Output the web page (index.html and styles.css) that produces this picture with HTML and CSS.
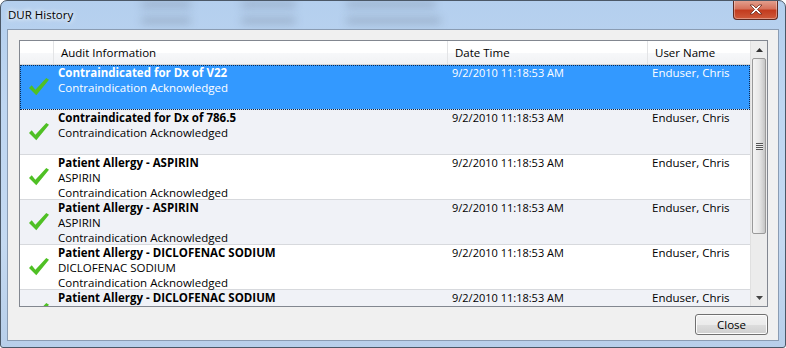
FILE: index.html
```html
<!DOCTYPE html>
<html lang="en">

<head>
    <meta charset="UTF-8">
    <title>DUR History</title>
    <link rel="stylesheet" href="styles.css">
</head>

<body>
    <div class="window">
        <div class="titlebar">
            <div class="glass">
                <span class="blob b1"></span><span class="blob b2"></span><span class="blob b3"></span>
                <span class="blob b4"></span><span class="blob b5"></span><span class="blob b6"></span>
            </div>
            <span class="title">DUR History</span>
            <button class="close-x">
                <svg width="16" height="11" viewBox="0 0 16 11"><path d="M2 1h3l3 3 3-3h3l-4.5 4.5L14 10h-3L8 7l-3 3H2l4.5-4.5z" fill="#fff" stroke="#6b2a1e" stroke-width="0.8"/></svg>
            </button>
        </div>
        <div class="client">
            <div class="list">
                <div class="grid">
                    <div class="header">
                        <div class="col icon"></div>
                        <div class="col audit">Audit Information</div>
                        <div class="col date">Date Time</div>
                        <div class="col user">User Name</div>
                    </div>
                    <div class="rows">
                        <div class="row selected">
                            <div class="col icon"><svg class="check" viewBox="0 0 24 22"><path d="M1 12l3-3 4 5L20 1l3 2-14 17z"/></svg></div>
                            <div class="col audit"><b>Contraindicated for Dx of V22</b><br>Contraindication Acknowledged</div>
                            <div class="col date">9/2/2010 11:18:53 AM</div>
                            <div class="col user">Enduser, Chris</div>
                        </div>
                        <div class="row alt">
                            <div class="col icon"><svg class="check" viewBox="0 0 24 22"><path d="M1 12l3-3 4 5L20 1l3 2-14 17z"/></svg></div>
                            <div class="col audit"><b>Contraindicated for Dx of 786.5</b><br>Contraindication Acknowledged</div>
                            <div class="col date">9/2/2010 11:18:53 AM</div>
                            <div class="col user">Enduser, Chris</div>
                        </div>
                        <div class="row">
                            <div class="col icon"><svg class="check" viewBox="0 0 24 22"><path d="M1 12l3-3 4 5L20 1l3 2-14 17z"/></svg></div>
                            <div class="col audit"><b>Patient Allergy - ASPIRIN</b><br>ASPIRIN<br>Contraindication Acknowledged</div>
                            <div class="col date">9/2/2010 11:18:53 AM</div>
                            <div class="col user">Enduser, Chris</div>
                        </div>
                        <div class="row alt">
                            <div class="col icon"><svg class="check" viewBox="0 0 24 22"><path d="M1 12l3-3 4 5L20 1l3 2-14 17z"/></svg></div>
                            <div class="col audit"><b>Patient Allergy - ASPIRIN</b><br>ASPIRIN<br>Contraindication Acknowledged</div>
                            <div class="col date">9/2/2010 11:18:53 AM</div>
                            <div class="col user">Enduser, Chris</div>
                        </div>
                        <div class="row">
                            <div class="col icon"><svg class="check" viewBox="0 0 24 22"><path d="M1 12l3-3 4 5L20 1l3 2-14 17z"/></svg></div>
                            <div class="col audit"><b>Patient Allergy - DICLOFENAC SODIUM</b><br>DICLOFENAC SODIUM<br>Contraindication Acknowledged</div>
                            <div class="col date">9/2/2010 11:18:53 AM</div>
                            <div class="col user">Enduser, Chris</div>
                        </div>
                        <div class="row alt">
                            <div class="col icon"><svg class="check" viewBox="0 0 24 22"><path d="M1 12l3-3 4 5L20 1l3 2-14 17z"/></svg></div>
                            <div class="col audit"><b>Patient Allergy - DICLOFENAC SODIUM</b><br>DICLOFENAC SODIUM<br>Contraindication Acknowledged</div>
                            <div class="col date">9/2/2010 11:18:53 AM</div>
                            <div class="col user">Enduser, Chris</div>
                        </div>
                    </div>
                </div>
                <div class="scrollbar">
                    <div class="arrow"><svg width="7" height="4" viewBox="0 0 7 4"><path d="M0 4L3.5 0 7 4z" fill="#333"/></svg></div>
                    <div class="thumb"><span class="grip"></span></div>
                    <div class="track"></div>
                    <div class="arrow"><svg width="7" height="4" viewBox="0 0 7 4"><path d="M0 0h7L3.5 4z" fill="#444"/></svg></div>
                </div>
            </div>
            <div class="actions">
                <button class="btn">Close</button>
            </div>
        </div>
    </div>
</body>

</html>
```

FILE: styles.css
```css
* {
    margin: 0;
    padding: 0;
    box-sizing: border-box;
}

body {
    width: 786px;
    height: 348px;
    overflow: hidden;
    font-family: 'Open Sans', 'Noto Sans', sans-serif;
    font-size: 11.5px;
    color: #000;
    background: #fff;
}

.window {
    width: 786px;
    height: 348px;
    border: 1px solid #4b5867;
    border-radius: 7px 7px 3px 3px;
    background: linear-gradient(180deg, #b4cfee 0%, #bed6f1 30%, #c4d9f1 70%, #b8cfea 100%);
    display: flex;
    flex-direction: column;
    overflow: hidden;
}

.titlebar {
    height: 28px;
    display: flex;
    align-items: flex-start;
    position: relative;
}

.glass {
    position: absolute;
    inset: 0;
    overflow: hidden;
}

.blob {
    position: absolute;
    height: 7px;
    background: #7d8ea5;
    filter: blur(4px);
    opacity: 0.45;
    border-radius: 3px;
}

.b1 { left: 140px; top: 0; width: 50px; }
.b2 { left: 240px; top: 0; width: 55px; }
.b3 { left: 345px; top: 0; width: 90px; }
.b4 { left: 140px; top: 16px; width: 50px; }
.b5 { left: 240px; top: 16px; width: 55px; }
.b6 { left: 345px; top: 16px; width: 95px; }

.title {
    position: relative;
    font-family: 'Open Sans', sans-serif;
    font-size: 11.5px;
    margin: 6px 0 0 7px;
    color: #000;
    text-shadow: 0 0 6px #fff, 0 0 4px #fff;
}

.close-x {
    position: relative;
    margin: -1px 0 0 auto;
    margin-right: 7px;
    width: 45px;
    height: 20px;
    border: 1px solid #5e2a21;
    border-top: 0;
    border-radius: 0 0 4px 4px;
    background: linear-gradient(180deg, #e4a493 0%, #d6735d 45%, #c33c1f 55%, #cf5a3b 100%);
    display: flex;
    align-items: center;
    justify-content: center;
    box-shadow: inset 0 0 0 1px rgba(255, 255, 255, 0.35);
}

.client {
    flex: 1;
    margin: 0 6px 6px 6px;
    border: 1px solid #8a9cb3;
    background: #f0f0f0;
    padding: 10px 10px 0 11px;
    display: flex;
    flex-direction: column;
}

.list {
    height: 267px;
    border: 1px solid #828790;
    background: #fff;
    display: flex;
}

.grid {
    flex: 1;
    overflow: hidden;
    display: flex;
    flex-direction: column;
}

.header {
    display: flex;
    height: 24px;
    background: linear-gradient(180deg, #fff 0%, #fff 50%, #f7f8fa 51%, #f1f2f4 100%);
    border-bottom: 1px solid #d5d5d5;
    flex: none;
}

.header .col {
    border-right: 1px solid #e3e4e6;
    padding: 4px 0 0 7px;
    white-space: nowrap;
}

.header .col:last-child {
    border-right: 0;
}

.icon {
    width: 34px;
    flex: none;
}

.audit {
    width: 394px;
    flex: none;
}

.date {
    width: 200px;
    flex: none;
}

.user {
    flex: 1;
}

.rows {
    flex: 1;
    overflow: hidden;
}

.row {
    display: flex;
    height: 45px;
    border-bottom: 1px solid #d7d9dd;
    line-height: 15px;
    background: #fff;
}

.row.alt {
    background: #f0f2f7;
}

.row .col {
    padding: 0 0 0 4px;
    white-space: nowrap;
}

.row .date {
    font-size: 11px;
}

.row .icon {
    display: flex;
    align-items: center;
    padding: 0 0 0 8px;
}

.row b {
    font-weight: 700;
}

.row.selected {
    background: #3399ff;
    color: #fff;
    outline: 1px dotted #0a2a55;
    outline-offset: -1px;
}

.check {
    width: 22px;
    height: 20px;
    fill: #4fc024;
}

.scrollbar {
    width: 17px;
    flex: none;
    background: #ececec;
    border-left: 1px solid #e0e0e0;
    display: flex;
    flex-direction: column;
}

.arrow {
    height: 17px;
    display: flex;
    align-items: center;
    justify-content: center;
    flex: none;
}

.thumb {
    height: 176px;
    margin: 0 1px;
    border: 1px solid #9a9a9a;
    border-radius: 2px;
    background: linear-gradient(90deg, #f4f4f4 0%, #e8e8e8 50%, #d4d4d4 80%, #c4c4c4 100%);
    display: flex;
    align-items: center;
    justify-content: center;
    flex: none;
}

.grip {
    width: 7px;
    height: 7px;
    background: repeating-linear-gradient(180deg, #555 0, #555 1px, #eee 1px, #eee 2px);
}

.track {
    flex: 1;
}

.actions {
    display: flex;
    justify-content: flex-end;
    padding-top: 7px;
}

.btn {
    width: 73px;
    height: 21px;
    border: 1px solid #707070;
    border-radius: 3px;
    background: linear-gradient(180deg, #f2f2f2 0%, #ebebeb 50%, #dddddd 51%, #cfcfcf 100%);
    font-family: 'Open Sans', sans-serif;
    font-size: 11.5px;
    color: #000;
    box-shadow: inset 0 0 0 1px #fcfcfc;
}
```
